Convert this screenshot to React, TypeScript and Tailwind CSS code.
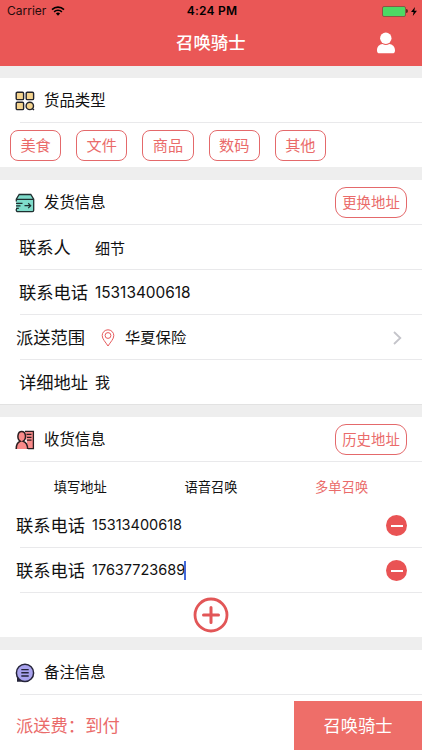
import type { ReactNode } from "react";

const categories = ["美食", "文件", "商品", "数码", "其他"];
const phones = ["15313400618", "17637723689"];

function StatusBar() {
  return (
    <div className="flex h-[22px] items-center pl-[7px] pr-[5px] text-black">
      <div className="flex flex-1 items-center gap-[5px]">
        <span className="text-[12px] leading-none opacity-85">Carrier</span>
        <svg width="14" height="10" viewBox="0 0 14 10" fill="none">
          <path d="M1 3.6a8.6 8.6 0 0 1 12 0" stroke="#000" strokeWidth="1.6" />
          <path
            d="M3.1 5.9a5.6 5.6 0 0 1 7.8 0"
            stroke="#000"
            strokeWidth="1.5"
          />
          <path d="M7 9.7 4.9 7.6a3 3 0 0 1 4.2 0Z" fill="#000" />
        </svg>
      </div>
      <span className="text-[12px] font-semibold leading-none tracking-[0.2px]">
        4:24 PM
      </span>
      <div className="flex flex-1 items-center justify-end">
        <div className="h-[11px] w-6 rounded-[2px] border border-[#8c5545] bg-[#4cd964]" />
        <div className="h-1 w-[2px] rounded-r-full bg-[#5a2a20]" />
        <svg className="ml-[3px]" width="6" height="9" viewBox="0 0 6 9">
          <path d="M4 0 0 5h2.6L1.8 9 6 3.8H3.3Z" fill="#000" />
        </svg>
      </div>
    </div>
  );
}

function GridIcon() {
  return (
    <svg width="20" height="20" viewBox="0 0 20 20">
      <g fill="#f5d48f" stroke="#22222a" strokeWidth="1.4">
        <rect x="1.2" y="1.2" width="7.4" height="7.4" rx="1.2" />
        <rect x="11.2" y="1.2" width="7.4" height="7.4" rx="1.2" />
        <rect x="1.2" y="11.2" width="7.4" height="7.4" rx="1.2" />
        <circle cx="14.8" cy="14.9" r="3.7" />
        <path d="m17 17.200 2 1.800" />
      </g>
    </svg>
  );
}

function BoxIcon() {
  return (
    <svg width="20" height="20" viewBox="0 0 20 20" fill="none">
      <path
        d="M4.2 1.5h11.6l2.9 4.6v11.1a1.4 1.4 0 0 1-1.4 1.4H2.7a1.4 1.4 0 0 1-1.4-1.4V6.1Z"
        fill="#7fdccb"
      />
      <path
        d="M1.3 8.4V6.1l2.9-4.6h11.6l2.9 4.6v11.1a1.4 1.4 0 0 1-1.4 1.4H2.7a1.4 1.4 0 0 1-1.4-1.4V16M1.3 6.3h17.4"
        stroke="#1f2f30"
        strokeWidth="1.3"
      />
      <path
        d="M1 10.3h6.5M1 12.9h4.5M1 15.4h2.8M9.5 12.7h6M13.2 10.3l2.5 2.4-2.5 2.4"
        stroke="#1f2f30"
        strokeWidth="1.2"
      />
    </svg>
  );
}

function ContactIcon() {
  return (
    <svg width="20" height="20" viewBox="0 0 20 20" fill="none">
      <path
        d="M10 1.4h8.4v17.2H13"
        fill="#f98a89"
        stroke="#2b1e20"
        strokeWidth="1.3"
      />
      <path
        d="M11.5 4.4h5M12 7.3h4.500M12 10.1h4.500"
        stroke="#2b1e20"
        strokeWidth="1.2"
      />
      <path
        d="M1.2 19c0-4.2 1.2-6.8 4-7.8C1.4 8.5 2.6 1.5 6.7 1.5s5.3 7 1.5 9.7c2.8 1 4.4 3.6 4.4 7.8"
        fill="#f98a89"
        stroke="#2b1e20"
        strokeWidth="1.5"
      />
    </svg>
  );
}

function NoteIcon() {
  return (
    <svg width="20" height="20" viewBox="0 0 20 20" fill="none">
      <path d="M2 13.5v5.2h5Z" fill="#25243a" />
      <circle
        cx="10"
        cy="9.9"
        r="8.6"
        fill="#a9a3ee"
        stroke="#25243a"
        strokeWidth="1.5"
      />
      <path
        d="M6.3 6.6h7.4M6.3 9.8h7.4M6.3 13h7.4"
        stroke="#25243a"
        strokeWidth="1.4"
      />
    </svg>
  );
}

function PinIcon() {
  return (
    <svg
      width="14"
      height="18"
      viewBox="0 0 14 18"
      fill="none"
      stroke="#e65a5c"
    >
      <path d="M7 17C4.5 13 1.2 10 1.2 6.6a5.8 5.8 0 0 1 11.6 0C12.8 10 9.5 13 7 17Z" />
      <circle cx="7" cy="6.5" r="2.9" />
    </svg>
  );
}

interface SectionHeaderProps {
  icon: ReactNode;
  title: string;
  action?: string;
}

function SectionHeader({ icon, title, action }: SectionHeaderProps) {
  return (
    <div className="flex h-[45px] items-center px-[15px]">
      {icon}
      <h2 className="ml-[9px] pt-px text-[15.4px] leading-none">{title}</h2>
      {action && (
        <button className="ml-auto h-[31px] w-[72px] rounded-[11px] border border-[#e4696b] pt-px text-[14.4px] leading-none text-[#ea6b6a]">
          {action}
        </button>
      )}
    </div>
  );
}

function Divider() {
  return <div className="-mt-px ml-5 h-px bg-[#e9e9eb]" />;
}

function Gap({ className }: { className: string }) {
  return <div className={`bg-[#eeeeee] ${className}`} />;
}

function App() {
  return (
    <div className="flex h-[750px] w-[422px] flex-col overflow-hidden bg-white font-['Inter','Noto_Sans_CJK_SC',sans-serif] text-[#111]">
      <header className="h-[66px] shrink-0 bg-[#ea5756]">
        <StatusBar />
        <div className="flex h-[42px] items-center">
          <h1 className="ml-[176px] text-[17.4px] font-medium leading-none text-white">
            召唤骑士
          </h1>
          <svg
            className="ml-auto mr-[26px]"
            width="20"
            height="22"
            viewBox="0 0 20 22"
            fill="#fff"
          >
            <circle cx="9.8" cy="6.2" r="5.7" />
            <path d="M1 18.5c0-4 2.5-6.2 5.500-6.500 2 1.200 4.800 1.200 6.800 0 3 .3 5.700 2.500 5.700 6.500 0 2-1 2.800-2.500 2.800h-13C2 21.300 1 20.500 1 18.500Z" />
          </svg>
        </div>
      </header>

      <Gap className="h-3" />
      <section className="h-[89px]">
        <SectionHeader icon={<GridIcon />} title="货品类型" />
        <Divider />
        <div className="flex gap-[15px] pl-[10px] pt-[7px]">
          {categories.map((name) => (
            <button
              key={name}
              className="h-[31px] w-[51.2px] rounded-[8px] border border-[#e4696b] text-[15.2px] leading-none text-[#ea6b6a]"
            >
              {name}
            </button>
          ))}
        </div>
      </section>

      <Gap className="h-[13px]" />
      <section className="h-[224px]">
        <SectionHeader icon={<BoxIcon />} title="发货信息" action="更换地址" />
        <Divider />
        <div className="flex h-[45px] items-center pl-[19px] pt-px">
          <span className="w-[76px] text-[17.3px] leading-none">联系人</span>
          <span className="text-[15px] leading-none">细节</span>
        </div>
        <Divider />
        <div className="flex h-[45px] items-center pl-[19px] pt-px">
          <span className="w-[76px] text-[17.3px] leading-none">联系电话</span>
          <span className="text-[15.4px] leading-none">15313400618</span>
        </div>
        <Divider />
        <div className="flex h-[45px] items-center pl-4 pr-[20px]">
          <span className="w-[85px] text-[17.3px] leading-none">派送范围</span>
          <PinIcon />
          <span className="ml-[10px] text-[15.3px] leading-none">
            华夏保险
          </span>
          <svg
            className="ml-auto"
            width="9"
            height="14"
            viewBox="0 0 9 14"
            fill="none"
          >
            <path d="m1 1 6.300 6L1 13" stroke="#c4c4ca" strokeWidth="1.8" />
          </svg>
        </div>
        <Divider />
        <div className="flex h-[45px] items-center pl-[19px]">
          <span className="w-[76px] text-[17.3px] leading-none">详细地址</span>
          <span className="text-[15px] leading-none">我</span>
        </div>
      </section>

      <Gap className="h-[13px] border-t border-[#e2e2e2]" />
      <section className="h-[220px]">
        <SectionHeader
          icon={<ContactIcon />}
          title="收货信息"
          action="历史地址"
        />
        <Divider />
        <div className="flex h-[41px] items-center px-[15px] pt-[11px] text-[13.3px] leading-none">
          <span className="flex-1 text-center">填写地址</span>
          <span className="flex-1 text-center">语音召唤</span>
          <span className="flex-1 text-center text-[#ea6b6a]">多单召唤</span>
        </div>
        {phones.map((phone, i) => (
          <div key={phone}>
            <div className="flex h-[45px] items-center pl-4 pr-[15px]">
              <span className="w-[76px] text-[17.3px] leading-none">
                联系电话
              </span>
              <span className="text-[14.5px] leading-none">{phone}</span>
              {i === phones.length - 1 && (
                <span className="-ml-px h-[19px] w-[1.5px] bg-[#4369d9]" />
              )}
              <button className="ml-auto flex size-[21px] items-center justify-center rounded-full bg-[#e95354]">
                <span className="h-[2px] w-3 bg-white" />
              </button>
            </div>
            <Divider />
          </div>
        ))}
        <div className="flex h-[44px] items-center justify-center">
          <svg
            width="36"
            height="36"
            viewBox="0 0 36 36"
            fill="none"
            stroke="#e25657"
          >
            <circle cx="18" cy="18" r="16" strokeWidth="2.8" />
            <path
              d="M18 10.5v15M10.5 18h15"
              strokeWidth="3"
              strokeLinecap="round"
            />
          </svg>
        </div>
      </section>

      <Gap className="h-[13px]" />
      <section className="h-[51px]">
        <SectionHeader icon={<NoteIcon />} title="备注信息" />
        <Divider />
      </section>

      <footer className="flex h-[49px]">
        <div className="flex flex-1 items-center pl-4 pt-px text-[17.3px] leading-none text-[#ea6b6a]">
          派送费：到付
        </div>
        <button className="w-32 bg-[#ee6e69] text-[17.3px] leading-none text-white">
          召唤骑士
        </button>
      </footer>
    </div>
  );
}

export default App;
